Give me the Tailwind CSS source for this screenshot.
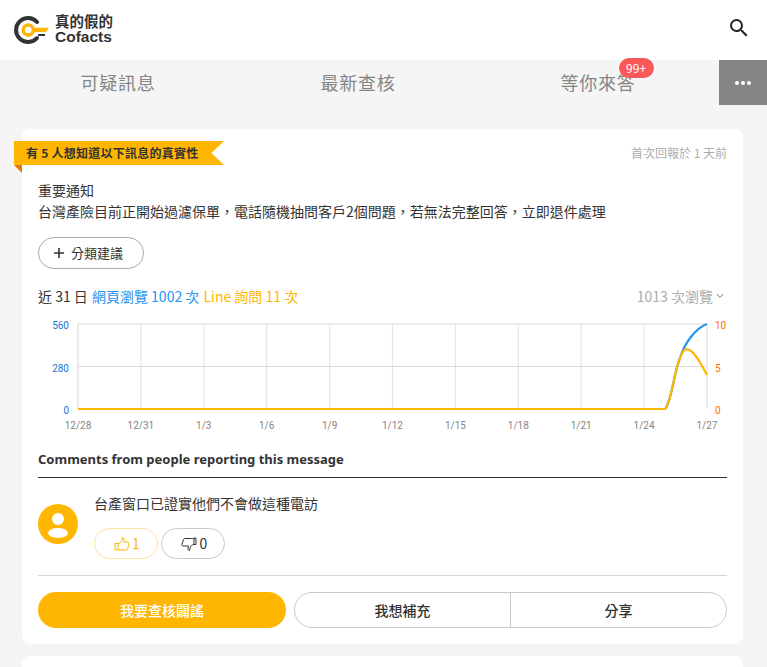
<!DOCTYPE html>
<html lang="zh-Hant">
<head>
  <meta charset="UTF-8" />
  <title>Cofacts 真的假的</title>
  <script src="https://cdn.jsdelivr.net/npm/@tailwindcss/browser@4"></script>
</head>
<body class="h-[667px] overflow-hidden bg-[#f5f5f5] font-['Noto_Sans_CJK_TC',sans-serif] text-[#333]">

  <!-- header -->
  <header class="h-[60px] bg-white flex items-center justify-between pl-[14px] pr-[16px]">
    <div class="flex items-center gap-[5px] mb-[4px] mt-[4px]">
      <svg width="36" height="30" viewBox="14 13 36 30" fill="none">
        <path d="M37 20A12 12 0 1 0 37 36" stroke="#333" stroke-width="4" stroke-linecap="round"/>
        <circle cx="28.300" cy="28" r="5" stroke="#ffb600" stroke-width="3.400"/>
        <path d="M33 25.800h16l-3 4.200H33z" fill="#ffb600"/>
        <path d="M38 33h7" stroke="#333" stroke-width="2"/>
      </svg>
      <div class="flex flex-col mt-[-2px] text-[#333] font-bold">
        <span class="text-[14.500px] leading-[16px]">真的假的</span>
        <span class="text-[15.500px] leading-[16px] font-['Liberation_Sans',sans-serif]">Cofacts</span>
      </div>
    </div>
    <svg class="mb-[4px]" width="24" height="24" viewBox="0 0 24 24" fill="#212121"><path d="M15.500 14h-.79l-.28-.27A6.470 6.470 0 0 0 16 9.500 6.500 6.500 0 1 0 9.500 16c1.610 0 3.090-.59 4.230-1.570l.27.28v.79l5 4.990L20.490 19l-4.990-5zm-6 0C7.010 14 5 11.990 5 9.500S7.010 5 9.500 5 14 7.010 14 9.500 11.990 14 9.500 14z"/></svg>
  </header>

  <!-- tabs -->
  <nav class="flex h-[45px] ml-[-2px]">
    <a class="w-[240px] flex items-center justify-center text-[18px] tracking-[0.7px] text-[#858585]">可疑訊息</a>
    <a class="w-[240px] flex items-center justify-center text-[18px] tracking-[0.7px] text-[#858585]">最新查核</a>
    <a class="w-[240px] flex items-center justify-center text-[18px] tracking-[0.7px] text-[#858585]">
      <span class="relative">等你來答
        <span class="absolute left-[58px] top-[-11px] h-[20px] w-[35px] rounded-full bg-[#fb5959] text-white text-[12px] flex items-center justify-center tracking-normal">99+</span>
      </span>
    </a>
    <button class="ml-auto w-[48px] bg-[#858585] flex items-center justify-center gap-[2px]">
      <span class="w-[4px] h-[4px] rounded-full bg-white"></span>
      <span class="w-[4px] h-[4px] rounded-full bg-white"></span>
      <span class="w-[4px] h-[4px] rounded-full bg-white"></span>
    </button>
  </nav>

  <!-- card -->
  <main class="ml-[22px] mr-[24px] mt-[24px]">
    <article class="relative bg-white rounded-lg h-[515px] px-4">
      <div class="absolute left-[-8px] top-[12px] h-[24px] w-[210px] bg-[#ffb600] [clip-path:polygon(0_0,100%_0,94%_50%,100%_100%,0_100%)] pl-[12px] flex items-center text-[12px] tracking-[0.25px] font-bold text-[#333]">有 5 人想知道以下訊息的真實性</div>
      <div class="absolute left-[-8px] top-[36px] w-0 h-0 border-t-[8px] border-l-[8px] border-t-[#e57c00] border-l-transparent"></div>

      <div class="flex justify-end pt-[16px] text-[12px] leading-[16px] text-[#adadad]">首次回報於 1 天前</div>

      <p class="mt-[19px] text-[14px] leading-[21px] text-[#333]">重要通知<br>台灣產險目前正開始過濾保單，電話隨機抽問客戶2個問題，若無法完整回答，立即退件處理</p>

      <button class="mt-[15px] w-[106px] h-[32px] pr-[6px] rounded-full border border-[#adadad] flex items-center justify-center gap-[6px] text-[13px] text-[#333]">
        <svg width="12" height="12" viewBox="0 0 12 12" fill="#333"><path d="M5.200 1h1.600v4.200H11v1.600H6.800V11H5.200V6.800H1V5.200h4.200z"/></svg>
        分類建議
      </button>

      <div class="mt-[16px] flex justify-between items-center h-[22px] text-[14px]">
        <div><span class="text-[#333]">近 31 日</span> <span class="ml-[1px] text-[#2196f3]">網頁瀏覽 1002 次</span> <span class="ml-[1px] text-[#ffb600]">Line 詢問 11 次</span></div>
        <div class="flex items-center gap-[3px] pr-[3px] text-[#adadad]">1013 次瀏覽
          <svg width="8" height="6" viewBox="0 0 9 6" fill="none" stroke="#999" stroke-width="1.200"><path d="M1 1l3.500 3.500L8 1"/></svg>
        </div>
      </div>

      <!-- chart -->
      <svg class="block mt-[9px] overflow-visible" width="689" height="122" viewBox="38 316 689 122" font-size="10" font-family="Roboto, sans-serif">
        <g stroke="#e6e6e6" stroke-width="1.200">
          <path d="M140.900 324V409M203.800 324V409M266.700 324V409M329.600 324V409M392.500 324V409M455.400 324V409M518.300 324V409M581.200 324V409M644.100 324V409"/>
          <path d="M78 324V409M707 324V409M78 324H707" stroke-width="1.600"/>
        </g>
        <path d="M78 366.500H707" stroke="#dcdcdc" stroke-width="1"/>
        <g fill="#1976d2" text-anchor="end">
          <text x="69" y="329">560</text>
          <text x="69" y="372">280</text>
          <text x="69" y="414">0</text>
        </g>
        <g fill="#ff6d00">
          <text x="715" y="329">10</text>
          <text x="715" y="372">5</text>
          <text x="715" y="414">0</text>
        </g>
        <g fill="#858585" text-anchor="middle">
          <text x="78" y="429">12/28</text>
          <text x="140.900" y="429">12/31</text>
          <text x="203.800" y="429">1/3</text>
          <text x="266.700" y="429">1/6</text>
          <text x="329.600" y="429">1/9</text>
          <text x="392.500" y="429">1/12</text>
          <text x="455.400" y="429">1/15</text>
          <text x="518.300" y="429">1/18</text>
          <text x="581.200" y="429">1/21</text>
          <text x="644.100" y="429">1/24</text>
          <text x="707" y="429">1/27</text>
        </g>
        <path d="M665 409C671 404 674 372 680 358C685 342 696 328 707 324" fill="none" stroke="#2196f3" stroke-width="2.200"/>
        <path d="M78 409H665C671 404 674 372 680 358C683 350 685 349 688 349.500C695 351 702 366 707 375" fill="none" stroke="#ffb600" stroke-width="2.200"/>
      </svg>

      <h3 class="mt-[11px] text-[13px] leading-[20px] font-bold text-[#333] font-['Noto_Sans',sans-serif] pb-[8px] border-b border-[#333]">Comments from people reporting this message</h3>

      <div class="flex gap-4 mt-[17px]">
        <div class="mt-[9px] w-[40px] h-[40px] rounded-full bg-[#ffb600] shrink-0 flex items-center justify-center">
          <svg width="40" height="40" viewBox="0 0 40 40" fill="#fff"><circle cx="20" cy="15" r="6"/><ellipse cx="20" cy="29" rx="10" ry="5"/></svg>
        </div>
        <div>
          <p class="mt-[-2px] text-[14px] leading-[21px] text-[#333]">台產窗口已證實他們不會做這種電訪</p>
          <div class="flex gap-[3px] mt-[14px]">
            <button class="w-[64px] h-[31px] pl-[2px] rounded-full border border-[#ffe3a0] flex items-center justify-center gap-[2px] text-[14px] text-[#ffb600]">
              <svg width="16" height="16" viewBox="0 0 16 16" fill="none" stroke="#ffb600" stroke-width="1"><path d="M1 7.500h3v6.500H1zM4 8l3.500-2.500L8.500 1.500c1.500 0 2 1.500 1 4.500H14c1 0 1.300 1 1 2l-1.500 5c-.3.700-.7 1-1.500 1H6c-1 0-1.500-.3-2-.8"/></svg>
              1
            </button>
            <button class="w-[64px] h-[31px] pl-[2px] rounded-full border border-[#c9c9c9] flex items-center justify-center gap-[3px] text-[14px] text-[#333]">
              <svg width="16" height="16" viewBox="0 0 16 16" fill="none" stroke="#333" stroke-width="1"><path d="M15 8.500h-2V2h2zM13 8l-3.500 2.500L8.500 14.500c-1.500 0-2-1.500-1-4.500H2c-1 0-1.300-1-1-2l1.500-4.500C2.800 2.800 3.200 2.500 4 2.500h6c1 0 1.500 0 3 .5"/></svg>
              0
            </button>
          </div>
        </div>
      </div>

      <div class="mt-[16px] border-t border-[#d6d6d6]"></div>

      <div class="mt-[16px] flex gap-[8px]">
        <button class="w-[248px] h-[36px] rounded-full bg-[#ffb600] text-white text-[14px] font-medium">我要查核闢謠</button>
        <div class="flex-1 h-[36px] rounded-full border border-[#c9c9c9] flex text-[14px] font-medium text-[#333]">
          <button class="flex-1 border-r border-[#c9c9c9]">我想補充</button>
          <button class="flex-1">分享</button>
        </div>
      </div>
    </article>

    <article class="bg-white rounded-lg h-[100px] mt-[12px]"></article>
  </main>

</body>
</html>
